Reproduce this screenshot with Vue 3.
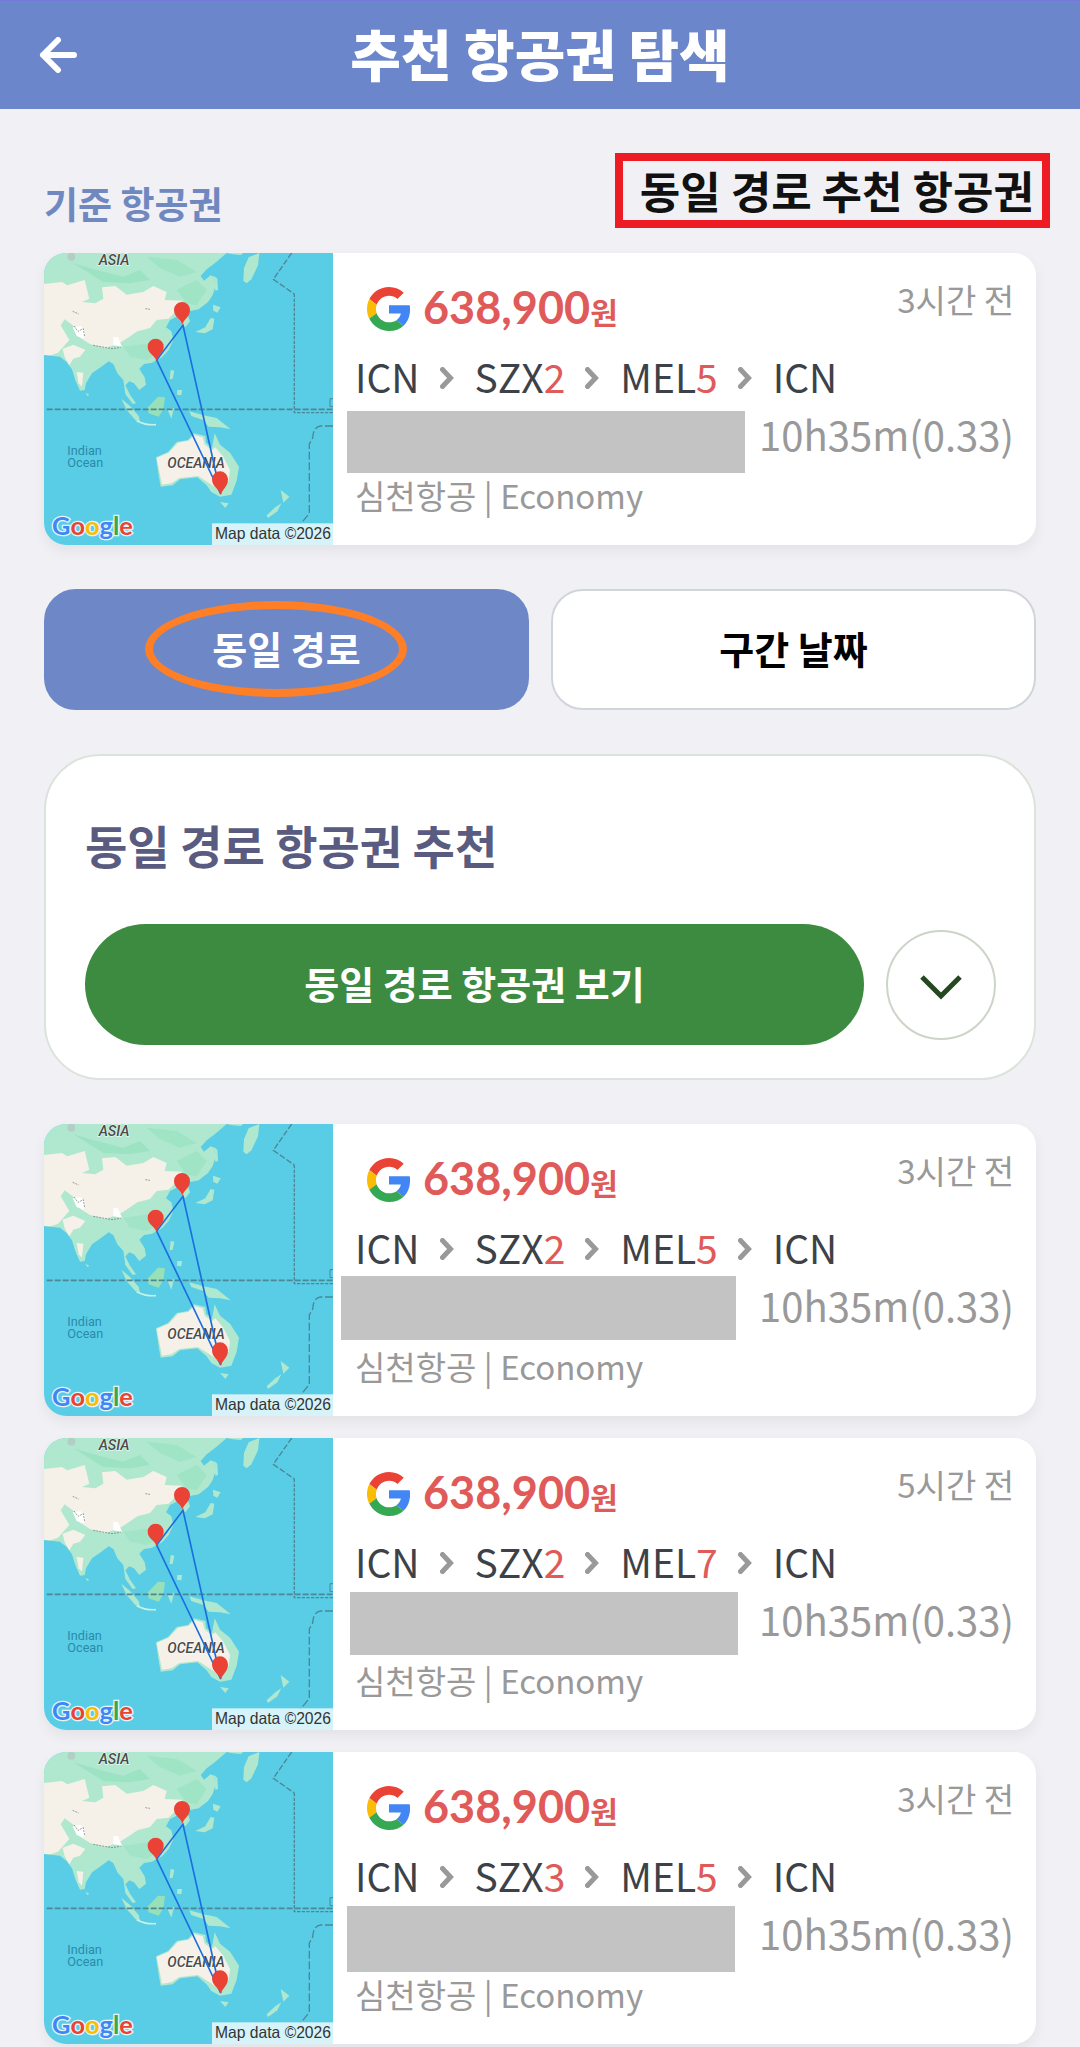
<script setup>
import { ref } from 'vue'

const activeTab = ref('route')
const expanded = ref(false)

const tabs = [
  { id: 'route', label: '동일 경로' },
  { id: 'dates', label: '구간 날짜' }
]

// mask: area that hides the departure and arrival times
const groups = [
  {
    id: 'base',
    flights: [
      {
        id: 1,
        ago: '3시간 전',
        stops: [['ICN'], ['SZX', 2], ['MEL', 5], ['ICN']],
        mask: { left: 14, top: 158, width: 398, height: 62 }
      }
    ]
  },
  {
    id: 'recommended',
    flights: [
      {
        id: 2,
        ago: '3시간 전',
        stops: [['ICN'], ['SZX', 2], ['MEL', 5], ['ICN']],
        mask: { left: 8, top: 152, width: 395, height: 64 }
      },
      {
        id: 3,
        ago: '5시간 전',
        stops: [['ICN'], ['SZX', 2], ['MEL', 7], ['ICN']],
        mask: { left: 17, top: 154, width: 388, height: 63 }
      },
      {
        id: 4,
        ago: '3시간 전',
        stops: [['ICN'], ['SZX', 3], ['MEL', 5], ['ICN']],
        mask: { left: 14, top: 154, width: 388, height: 66 }
      }
    ]
  }
]

const maskStyle = (mask) => ({
  left: mask.left + 'px',
  top: mask.top + 'px',
  width: mask.width + 'px',
  height: mask.height + 'px'
})
</script>

<template>
  <div class="page">
    <!-- shared drawings -->
    <svg class="defs" aria-hidden="true">
      <g id="map-land">
        <rect x="42" y="39" width="867" height="876" fill="#59cde6" />
        <g fill="#b0e8cf">
          <path
            d="M42 39H590L556 68 530 88 512 108 522 122 542 106 552 110 556 140 548 165 534 186 506 208 484 212 470 214 480 244 466 262 452 246 440 230 420 240 408 262 424 274 430 300 416 330 396 352 366 368 342 372 328 386 344 412 348 434 328 450 312 430 298 424 286 436 300 464 318 490 308 492 286 462 280 420 262 400 250 372 236 364 214 380 186 400 168 430 164 450 150 452 136 420 126 388 110 366 90 350 42 345Z"
          />
          <path d="M590 39h50l-8 6-24-2z" />
          <path d="M640 122 642 84 656 52 688 39 684 76 664 118 650 130Z" />
          <path d="M552 108 562 116 564 150 556 152Z" />
          <path d="M549 194 572 202 562 218 550 212Z" />
          <path d="M496 276 526 262 542 234 553 236 548 268 524 280Z" />
          <path d="M422 390 433 392 428 416 419 418Z" />
          <path d="M442 450 456 450 454 466 441 464Z" />
          <path d="M274 476 300 498 326 528 330 546 316 540 290 510Z" />
          <path d="M412 508 432 504 424 536Z" />
          <path d="M478 514 520 526 560 534 602 568 570 562 536 560 520 540 484 528Z" />
          <path d="M570 786 596 790 586 804Z" />
          <path d="M752 750 778 770 760 788Z" />
          <path d="M754 790 742 814 714 834 710 826 736 802Z" />
          <path d="M166 458 178 464 172 468Z" />
        </g>
        <path d="M352 504 384 470 405 472 400 508 386 530 356 520Z" fill="#98e0b8" />
        <path d="M320 542Q346 556 378 554" stroke="#c9f2e2" stroke-width="5" fill="none" />
        <g fill="#8fdfbd">
          <path d="M130 70 200 90 280 110 330 90 360 120 300 130 220 126Z" opacity=".6" />
          <path d="M350 50 440 60 500 96 450 110 390 84Z" opacity=".5" />
          <path d="M440 150 500 120 530 150 500 196 470 190Z" opacity=".5" />
          <path d="M280 320 360 310 400 330 350 360 300 350Z" opacity=".4" />
        </g>
        <g fill="#f5f0e8">
          <path
            d="M42 132 96 126 112 136 164 120 178 176 156 186 196 190 220 176 216 142 256 138 290 164 340 156 370 138 410 156 404 180 456 182 444 208 416 236 380 240 360 264 322 274 296 292 268 310 226 324 180 312 152 294 136 262 104 238 92 256 118 300 84 338 62 346 42 345Z"
          />
          <path d="M98 326 130 314 166 330 150 350 130 356 118 376 104 352Z" />
          <path d="M140 396 160 398 156 440 146 430Z" />
        </g>
        <path
          d="M128 262 152 258 166 276 160 296 140 288ZM250 290 264 292 276 320 250 316Z"
          fill="#fff"
        />
        <path
          d="M128 214 146 222M132 258 144 274 160 266 164 290M190 316 246 326 272 322M346 206 360 208"
          fill="none"
          stroke="#6b6f70"
          stroke-width="2"
          stroke-dasharray="6 3"
        />
        <circle cx="124" cy="50" r="12" fill="#b3cfc5" />
        <!-- Australia -->
        <path
          d="M378 652 414 636 440 606 474 600 492 580 526 588 528 608 546 624 554 580 570 614 600 638 627 680 620 722 604 764 570 770 544 756 530 736 502 712 450 718 428 736 392 740 386 706Z"
          fill="#b0e8cf"
        />
        <path
          d="M380 654 416 638 444 608 476 602 494 586 518 592 524 614 546 630 556 622 580 650 600 690 596 722 560 744 536 728 504 708 448 714 424 730 396 734 390 704Z"
          fill="#f5f0e8"
        />
        <!-- equator and date line -->
        <g fill="none" stroke="#4c8796">
          <path d="M50 508H909" stroke-width="5" stroke-dasharray="18 6" />
          <path d="M785 39 730 118 793 162" stroke-width="4" stroke-dasharray="18 6" />
          <path d="M793 162V518H909" stroke-width="4" stroke-dasharray="10 4" />
          <path
            d="M909 558H872Q850 560 848 594L838 612V820L812 852"
            stroke-width="4"
            stroke-dasharray="24 8"
          />
          <path d="M909 476H900V500H909" stroke-width="3" />
        </g>
      </g>
      <g id="map-route">
        <path d="M572 762 459 256 380 360Z" fill="none" stroke="#1a6fe0" stroke-width="5" />
        <g fill="#ea4335">
          <path d="M457 256C455 238 432 232 432 210A24 24 0 0 1 480 210C480 232 459 238 457 256Z" />
          <path d="M379 364C377 346 353 342 353 320A24 24 0 0 1 401 320C401 342 381 346 379 364Z" />
          <path d="M573 766C571 748 546 742 546 718A24 24 0 0 1 594 718C594 742 575 748 573 766Z" />
        </g>
        <rect x="546" y="850" width="363" height="65" fill="#fff" fill-opacity=".75" />
      </g>
      <symbol id="google-g" viewBox="0 0 48 48">
        <path
          fill="#ea4335"
          d="M24 9.5c3.54 0 6.71 1.22 9.21 3.6l6.85-6.85C35.9 2.38 30.47 0 24 0 14.62 0 6.51 5.38 2.56 13.22l7.98 6.19C12.43 13.72 17.74 9.5 24 9.5z"
        />
        <path
          fill="#4285f4"
          d="M46.98 24.55c0-1.57-.15-3.09-.38-4.55H24v9.02h12.94c-.58 2.96-2.26 5.48-4.78 7.18l7.73 6c4.51-4.18 7.09-10.36 7.09-17.65z"
        />
        <path
          fill="#fbbc05"
          d="M10.53 28.59c-.48-1.45-.76-2.99-.76-4.59s.27-3.14.76-4.59l-7.98-6.19C.92 16.46 0 20.12 0 24c0 3.88.92 7.54 2.56 10.78l7.97-6.19z"
        />
        <path
          fill="#34a853"
          d="M24 48c6.48 0 11.93-2.13 15.89-5.81l-7.73-6c-2.15 1.45-4.92 2.3-8.16 2.3-6.26 0-11.57-4.22-13.47-9.91l-7.98 6.19C6.51 42.62 14.62 48 24 48z"
        />
      </symbol>
    </svg>

    <header class="header">
      <button type="button" class="back" aria-label="뒤로">
        <svg viewBox="0 0 38 36" width="38" height="36">
          <path
            d="M19 3 4 18 19 33M4 18H35"
            fill="none"
            stroke="#fff"
            stroke-width="6"
            stroke-linecap="round"
            stroke-linejoin="round"
          />
        </svg>
      </button>
      <h1>추천 항공권 탐색</h1>
    </header>

    <main class="content">
      <div class="intro">
        <h2 class="intro_label">기준 항공권</h2>
        <p class="intro_note">동일 경로 추천 항공권</p>
      </div>

      <template v-for="group in groups" :key="group.id">
        <section class="cards">
          <article v-for="flight in group.flights" :key="flight.id" class="card">
            <svg class="card_map" viewBox="42 39 867 876" preserveAspectRatio="xMidYMid slice">
              <use href="#map-land" />
              <text x="206" y="76" font-size="43" class="continent">ASIA</text>
              <text x="412" y="685" font-size="42" class="continent">OCEANIA</text>
              <text x="112" y="645" font-size="38" class="ocean">Indian</text>
              <text x="112" y="680" font-size="38" class="ocean">Ocean</text>
              <use href="#map-route" />
              <text x="66" y="886" font-size="76" class="google">
                <tspan fill="#4285f4">G</tspan><tspan fill="#ea4335">o</tspan><tspan fill="#fbbc05">o</tspan><tspan fill="#4285f4">g</tspan><tspan fill="#34a853">l</tspan><tspan fill="#ea4335">e</tspan>
              </text>
              <text x="555" y="898" font-size="47" class="copyright">Map data ©2026</text>
            </svg>
            <div class="card_info">
              <div class="card_top">
                <svg class="card_logo"><use href="#google-g" /></svg>
                <strong class="price">638,900<span class="won">원</span></strong>
                <span class="ago">{{ flight.ago }}</span>
              </div>
              <div class="route">
                <template v-for="(stop, i) in flight.stops" :key="i">
                  <svg v-if="i > 0" class="route_arrow" viewBox="0 0 14 22" width="14" height="22">
                    <path
                      d="M2.500 2.500 10.500 11 2.500 19.500"
                      fill="none"
                      stroke="#999"
                      stroke-width="5"
                      stroke-linecap="round"
                      stroke-linejoin="miter"
                    />
                  </svg>
                  <span>{{ stop[0] }}<span v-if="stop[1]" class="days">{{ stop[1] }}</span></span>
                </template>
              </div>
              <div class="duration">10h35m(0.33)</div>
              <div class="airline">심천항공 | Economy</div>
              <span class="mask" :style="maskStyle(flight.mask)"></span>
            </div>
          </article>
        </section>

        <template v-if="group.id === 'base'">
          <div class="tabs">
            <button
              v-for="tab in tabs"
              :key="tab.id"
              type="button"
              class="tab"
              :class="{ active: activeTab === tab.id }"
              @click="activeTab = tab.id"
            >
              {{ tab.label }}
              <span v-if="activeTab === tab.id" class="tab_ring"></span>
            </button>
          </div>

          <section class="panel">
            <h2>동일 경로 항공권 추천</h2>
            <div class="panel_actions">
              <button type="button" class="view">동일 경로 항공권 보기</button>
              <button type="button" class="toggle" aria-label="펼치기" @click="expanded = !expanded">
                <svg viewBox="0 0 42 26" width="42" height="26">
                  <path d="M2 3 21 22 40 3" fill="none" stroke="#24481f" stroke-width="5" />
                </svg>
              </button>
            </div>
          </section>
        </template>
      </template>
    </main>
  </div>
</template>

<style>
body {
  background-color: #f0f0f5;
}
</style>

<style scoped>
.page {
  font-family: 'Noto Sans CJK KR', sans-serif;
  background-color: #f0f0f5;
}

h1,
h2,
p {
  margin: 0;
}

button {
  font-family: inherit;
  cursor: pointer;
}

.defs {
  position: absolute;
  width: 0;
  height: 0;
}

.header {
  display: grid;
  grid-template-columns: 77px 1fr 77px;
  align-items: center;
  height: 108px;
  border-top: 1px solid #7577d9;
  background-color: #6b86ca;
}

.back {
  display: flex;
  justify-content: flex-end;
  padding: 0;
  border: none;
  background: none;
}

.header h1 {
  padding-bottom: 6px;
  color: #fff;
  font-size: 55px;
  font-weight: 900;
  line-height: 80px;
  text-align: center;
}

.content {
  padding: 44px 44px 3px;
}

.intro {
  display: flex;
  justify-content: space-between;
  align-items: flex-end;
  margin-bottom: 25px;
}

.intro_label {
  color: #7088c0;
  font-size: 37px;
  font-weight: 700;
  line-height: 50px;
}

.intro_note {
  margin-right: -14px;
  padding: 0 8px 0 17px;
  border: 8px solid #ed1c24;
  color: #111;
  font-size: 44px;
  font-weight: 700;
  line-height: 59px;
}

.cards {
  display: flex;
  flex-direction: column;
  gap: 22px;
}

.card {
  display: flex;
  overflow: hidden;
  border-radius: 22px;
  background-color: #fff;
  box-shadow: 0 6px 14px rgba(0, 0, 0, 0.06);
}

.card_map {
  flex: none;
  width: 289px;
  height: 292px;
}

.continent,
.ocean {
  font-family: Roboto, sans-serif;
}

.continent {
  fill: #4a4a4a;
  font-style: italic;
  font-weight: 500;
  paint-order: stroke;
  stroke: rgba(255, 255, 255, 0.7);
  stroke-width: 4px;
}

.ocean {
  fill: #2b8aa8;
}

.google {
  font-family: Lato, sans-serif;
  font-weight: 700;
  paint-order: stroke;
  stroke: #e4f6fa;
  stroke-width: 8px;
}

.copyright {
  font-family: 'Liberation Sans', sans-serif;
  fill: #333;
}

.card_info {
  position: relative;
  flex: 1;
  padding: 23px 22px 19px;
}

.card_top {
  display: flex;
  align-items: center;
  height: 66px;
  margin-bottom: 6px;
}

.card_logo {
  width: 44px;
  height: 44px;
  margin: 0 12px;
}

.price {
  color: #e05a5a;
  font-family: Lato, 'Noto Sans CJK KR', sans-serif;
  font-size: 45px;
  font-weight: 700;
  line-height: 64px;
}

.won {
  font-size: 30px;
}

.ago {
  align-self: flex-start;
  margin-left: auto;
  color: #999;
  font-size: 33px;
  line-height: 46px;
}

.route {
  display: flex;
  align-items: center;
  color: #3d4148;
  font-size: 39px;
  line-height: 56px;
}

.route_arrow {
  margin: 4px 21px 0 20px;
}

.days {
  color: #e05a5a;
}

.duration {
  color: #999;
  font-size: 40px;
  line-height: 60px;
  text-align: right;
}

.airline {
  color: #999;
  font-size: 33px;
  line-height: 62px;
}

.mask {
  position: absolute;
  background-color: #c3c3c3;
}

.tabs {
  display: grid;
  grid-template-columns: 1fr 1fr;
  gap: 22px;
  margin: 44px 0;
}

.tab {
  position: relative;
  padding: 31px 0 34px;
  border: 2px solid #d0d5dc;
  border-radius: 32px;
  background-color: #fff;
  color: #000;
  font-size: 38px;
  font-weight: 700;
  line-height: 52px;
}

.tab.active {
  border-color: #6e88c7;
  background-color: #6e88c7;
  color: #fff;
}

/* highlight drawn over the selected tab */
.tab_ring {
  position: absolute;
  top: 10px;
  left: 99px;
  box-sizing: border-box;
  width: 262px;
  height: 96px;
  border: 8px solid #ff7f27;
  border-radius: 50%;
}

.panel {
  margin-bottom: 44px;
  padding: 50px 38px 33px 39px;
  border: 2px solid #dbe3da;
  border-radius: 56px;
  background-color: #fff;
}

.panel h2 {
  margin-bottom: 42px;
  color: #595b80;
  font-size: 46px;
  font-weight: 700;
  line-height: 76px;
}

.panel_actions {
  display: flex;
  align-items: center;
  gap: 22px;
}

.view {
  flex: 1;
  padding: 33px 0 36px;
  border: none;
  border-radius: 61px;
  background-color: #3d8b40;
  color: #fff;
  font-size: 38px;
  font-weight: 700;
  line-height: 52px;
}

.toggle {
  display: flex;
  justify-content: center;
  align-items: center;
  width: 110px;
  height: 110px;
  padding: 4px 0 0;
  border: 2px solid #cdd5c9;
  border-radius: 50%;
  background-color: #fff;
}
</style>
